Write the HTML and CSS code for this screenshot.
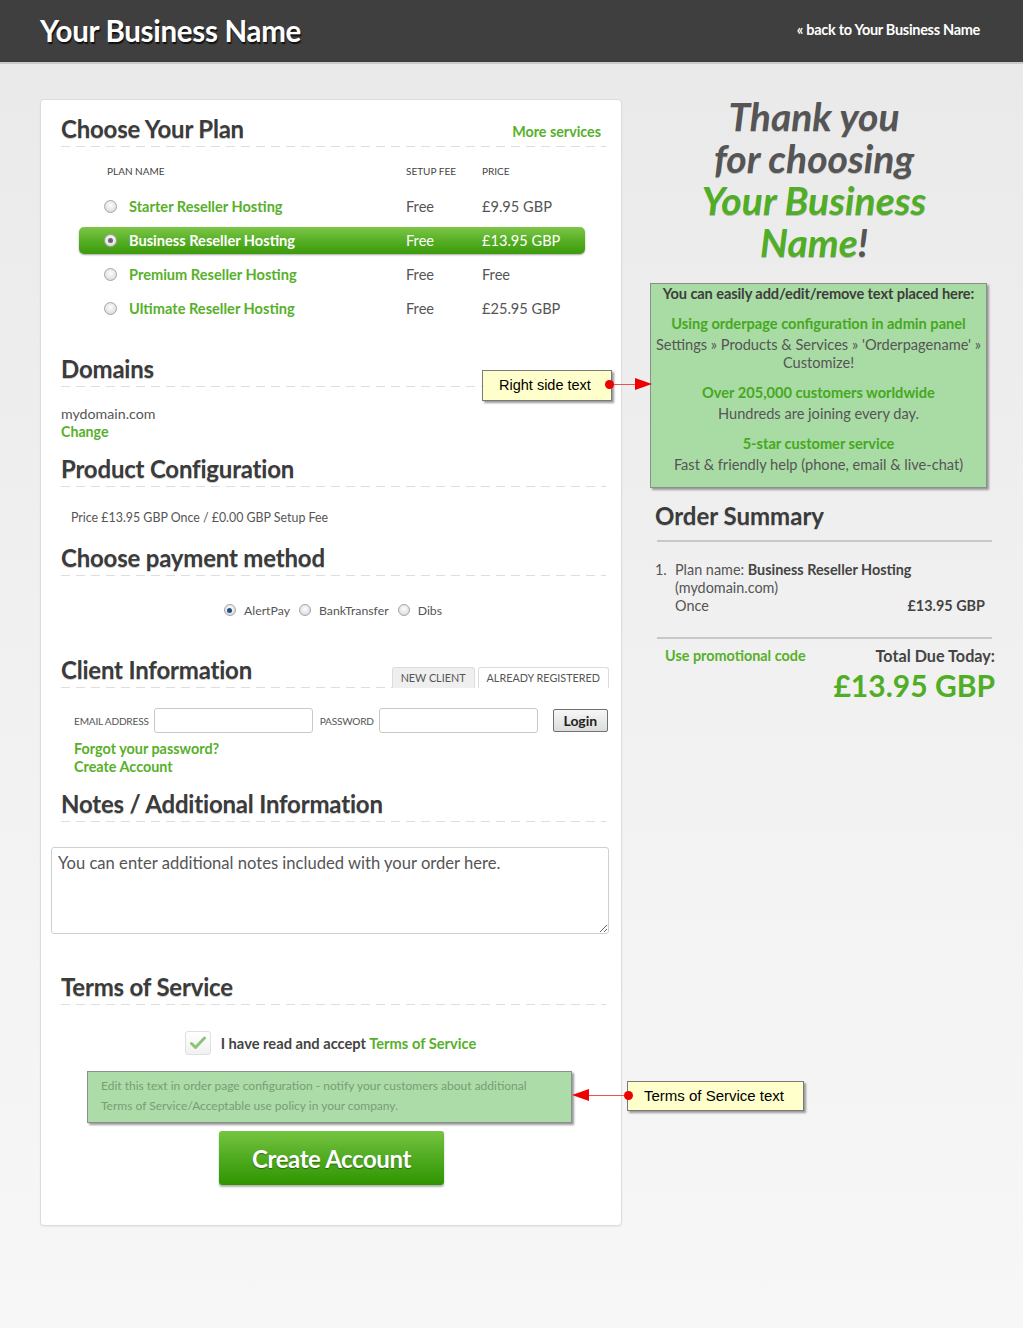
FILE: index.html
```html
<!DOCTYPE html>
<html>
<head>
<meta charset="utf-8">
<title>Order</title>
<link rel="stylesheet" href="styles.css">
</head>
<body>
<header class="topbar">
  <div class="brand">Your Business Name</div>
  <a class="back" href="#">« back to Your Business Name</a>
</header>

<main class="page">
  <section class="card">
    <div class="sec-head">
      <h2>Choose Your Plan</h2>
      <a class="link more" href="#">More services</a>
    </div>
    <div class="plans">
      <div class="plan-row plan-th">
        <span class="th-name">PLAN NAME</span>
        <span>SETUP FEE</span>
        <span>PRICE</span>
      </div>
      <div class="plan-row">
        <span class="radio"></span>
        <span class="pname">Starter Reseller Hosting</span>
        <span>Free</span>
        <span>£9.95 GBP</span>
      </div>
      <div class="plan-row selected">
        <span class="radio on"></span>
        <span class="pname">Business Reseller Hosting</span>
        <span>Free</span>
        <span>£13.95 GBP</span>
      </div>
      <div class="plan-row">
        <span class="radio"></span>
        <span class="pname">Premium Reseller Hosting</span>
        <span>Free</span>
        <span>Free</span>
      </div>
      <div class="plan-row">
        <span class="radio"></span>
        <span class="pname">Ultimate Reseller Hosting</span>
        <span>Free</span>
        <span>£25.95 GBP</span>
      </div>
    </div>

    <div class="sec-head s-domains"><h2>Domains</h2></div>
    <div class="domain">
      <div>mydomain.com</div>
      <a class="link" href="#">Change</a>
    </div>

    <div class="sec-head s-config"><h2>Product Configuration</h2></div>
    <div class="config">Price £13.95 GBP Once / £0.00 GBP Setup Fee</div>

    <div class="sec-head s-pay"><h2>Choose payment method</h2></div>
    <div class="pay">
      <span class="radio sm blue"></span><span class="pay-l">AlertPay</span>
      <span class="radio sm"></span><span class="pay-l">BankTransfer</span>
      <span class="radio sm"></span><span class="pay-l">Dibs</span>
    </div>

    <div class="sec-head s-client">
      <h2>Client Information</h2>
      <div class="tabs">
        <span class="tab">NEW CLIENT</span>
        <span class="tab active">ALREADY REGISTERED</span>
      </div>
    </div>
    <div class="login">
      <label class="lbl">EMAIL ADDRESS</label>
      <input class="field" type="text">
      <label class="lbl lbl-pw">PASSWORD</label>
      <input class="field" type="password">
      <button class="btn-login">Login</button>
    </div>
    <div class="login-links">
      <a class="link" href="#">Forgot your password?</a>
      <a class="link" href="#">Create Account</a>
    </div>

    <div class="sec-head s-notes"><h2>Notes / Additional Information</h2></div>
    <textarea class="notes">You can enter additional notes included with your order here.</textarea>

    <div class="sec-head s-terms"><h2>Terms of Service</h2></div>
    <div class="accept">
      <span class="check"><svg width="16" height="14" viewBox="0 0 16 14"><path d="M1.5 7.5 L5.5 11.5 L14.5 2" fill="none" stroke="#8cc47a" stroke-width="3" stroke-linecap="round" stroke-linejoin="round"/></svg></span>
      <span class="accept-t">I have read and accept <a class="link" href="#">Terms of Service</a></span>
    </div>
    <div class="tos-box">Edit this text in order page configuration - notify your customers about additional Terms of Service/Acceptable use policy in your company.</div>
    <div class="create-wrap"><button class="btn-create">Create Account</button></div>
  </section>

  <aside class="side">
    <h1 class="thanks">Thank you<br>for choosing<br><span class="g">Your Business<br>Name</span>!</h1>
    <div class="promo">
      <p class="promo-top">You can easily add/edit/remove text placed here:</p>
      <p class="pt">Using orderpage configuration in admin panel</p>
      <p class="pd">Settings » Products &amp; Services » 'Orderpagename' » Customize!</p>
      <p class="pt">Over 205,000 customers worldwide</p>
      <p class="pd">Hundreds are joining every day.</p>
      <p class="pt">5-star customer service</p>
      <p class="pd">Fast &amp; friendly help (phone, email &amp; live-chat)</p>
    </div>
    <h2 class="sum-head">Order Summary</h2>
    <div class="sum-list">
      <div class="sum-item">
        <span class="num">1.</span>
        <div class="sum-body">
          <div>Plan name: <b>Business Reseller Hosting</b></div>
          <div>(mydomain.com)</div>
          <div class="sum-line"><span>Once</span><b>£13.95 GBP</b></div>
        </div>
      </div>
    </div>
    <div class="totals">
      <a class="link promo-link" href="#">Use promotional code</a>
      <div class="tot">
        <div class="tot-l">Total Due Today:</div>
        <div class="tot-v">£13.95 GBP</div>
      </div>
    </div>
  </aside>

  <div class="note note-right">Right side text</div>
  <div class="arrow arrow-right"><span class="dot"></span><span class="ln"></span><span class="tri"></span></div>
  <div class="note note-tos">Terms of Service text</div>
  <div class="arrow arrow-left"><span class="tri"></span><span class="ln"></span><span class="dot"></span></div>
</main>
</body>
</html>
```

FILE: styles.css
```css
* { box-sizing: border-box; }
html, body { margin: 0; padding: 0; }
body {
  font-family: Lato, "Open Sans", sans-serif;
  font-size: 14.6px;
  color: #555;
  background: linear-gradient(#e9e9e9, #f0f0f0 600px, #f7f7f7);
  min-height: 1328px;
}
a { text-decoration: none; }
.link { color: #57b02a; font-weight: bold; }
h1, h2, p { margin: 0; }

.topbar {
  height: 64px;
  background: #3f3f3f;
  border-bottom: 2px solid #c9c9c9;
  display: flex;
  align-items: center;
  justify-content: space-between;
  padding: 0 43px 0 40px;
}
.brand {
  color: #fff;
  font-size: 29.5px;
  font-weight: bold;
  letter-spacing: -0.3px;
  text-shadow: 1px 2px 1px #111;
  margin-top: -2px;
}
.back {
  color: #fff;
  font-size: 14.5px;
  font-weight: bold;
  letter-spacing: -0.3px;
  margin-top: -4px;
}

.page {
  position: relative;
  display: flex;
  align-items: flex-start;
  gap: 28px;
  padding: 35px 0 0 40px;
}

.card {
  width: 582px;
  background: #fff;
  border: 1px solid #dcdcdc;
  border-radius: 4px;
  box-shadow: 0 1px 2px rgba(0,0,0,.06);
  padding: 14px 15px 40px 20px;
}

.sec-head {
  display: flex;
  justify-content: space-between;
  align-items: flex-end;
  padding-bottom: 4px;
  height: 33px;
  background: repeating-linear-gradient(90deg, #dedede 0 9px, transparent 9px 15px) left bottom / 100% 1px no-repeat;
}
.sec-head h2 {
  font-size: 24px;
  line-height: 29px;
  font-weight: bold;
  color: #3b3b3b;
  letter-spacing: -0.2px;
  text-shadow: 0 1px 0 #ccc;
}
.more { font-size: 14.3px; margin: 0 5px 3px 0; }

.plans { margin: 11px 21px 0 18px; display: flex; flex-direction: column; gap: 7px; }
.plan-row {
  display: grid;
  grid-template-columns: 50px 277px 76px 1fr;
  align-items: center;
  height: 27px;
  color: #555;
  font-size: 14.6px;
}
.plan-th { height: 26px; font-size: 10px; color: #444; margin-bottom: 2px; }
.plan-th .th-name { grid-column: 1 / 3; padding-left: 28px; }
.pname { color: #57b02a; font-weight: bold; }
.plan-row.selected {
  background: linear-gradient(#7ec647, #53ad22 55%, #3c9a0c);
  border-radius: 5px;
  box-shadow: 0 1px 2px rgba(0,0,0,.35);
  color: #fff;
}
.plan-row.selected .pname { color: #fff; }

.radio {
  display: inline-block;
  width: 13px;
  height: 13px;
  margin-left: 25px;
  border-radius: 50%;
  border: 1px solid #a5a5a5;
  background: radial-gradient(circle at 50% 40%, #fdfdfd, #d3d3d3);
  position: relative;
  flex: none;
}
.radio.on::after {
  content: "";
  position: absolute;
  left: 3px; top: 3px;
  width: 5px; height: 5px;
  border-radius: 50%;
  background: #666;
}
.radio.sm { width: 12px; height: 12px; margin: 0 8px 0 0; }
.radio.blue::after {
  content: "";
  position: absolute;
  left: 2.5px; top: 2.5px;
  width: 5px; height: 5px;
  border-radius: 50%;
  background: #1f4f86;
}

.s-domains { margin-top: 32px; }
.domain { margin-top: 18px; line-height: 18px; font-size: 14.2px; }
.s-config { margin-top: 13px; }
.config { margin-top: 23px; padding-left: 10px; font-size: 12.4px; line-height: 16px; color: #555; }
.s-pay { margin-top: 17px; }
.pay { margin: 26px 0 0 8px; display: flex; justify-content: center; align-items: center; font-size: 12.3px; color: #555; height: 16px; }
.pay-l { margin-right: 9px; }

.s-client { margin-top: 37px; align-items: flex-end; padding-bottom: 0; }
.s-client h2 { margin-bottom: 4px; }
.tabs { display: flex; gap: 3px; margin-right: -3px; }
.tab {
  font-size: 10.8px;
  color: #555;
  height: 21px;
  line-height: 20px;
  padding: 0 8px;
  border: 1px solid #dcdcdc;
  border-bottom: none;
  border-radius: 3px 3px 0 0;
  background: #fff;
}
.tab:first-child { background: #efefef; }

.login { margin-top: 20px; display: flex; align-items: center; padding-left: 13px; white-space: nowrap; }
.lbl { font-size: 10.1px; color: #555; letter-spacing: -0.2px; flex: none; }
.field {
  flex: none;
  width: 159px;
  height: 25px;
  border: 1px solid #c9c9c9;
  border-radius: 3px;
  margin-left: 5px;
  background: #fff;
}
.lbl-pw { margin-left: 7px; }
.btn-login {
  flex: none;
  margin-left: 15px;
  width: 55px;
  height: 23px;
  border: 1px solid #707070;
  border-radius: 2px;
  background: linear-gradient(#f7f7f7, #dcdcdc);
  font-family: Lato, sans-serif;
  font-weight: bold;
  font-size: 14px;
  color: #222;
  padding: 0;
}
.login-links { margin-top: 7px; padding-left: 13px; display: flex; flex-direction: column; align-items: flex-start; line-height: 18px; font-size: 14.4px; }

.s-notes { margin-top: 13px; }
.notes {
  display: block;
  margin: 25px 0 0 -10px;
  width: 558px;
  height: 87px;
  border: 1px solid #cfcfcf;
  border-radius: 3px;
  padding: 5px 6px;
  font-family: Lato, sans-serif;
  font-size: 16.6px;
  color: #555;
  resize: vertical;
}
.s-terms { margin-top: 38px; }

.accept { margin-top: 26px; display: flex; justify-content: center; align-items: center; gap: 10px; margin-left: -6px; }
.check {
  width: 26px; height: 24px;
  border: 1px solid #e0e0e0;
  border-radius: 3px;
  background: linear-gradient(#fff, #f1f1f1);
  display: flex; align-items: center; justify-content: center;
}
.accept-t { font-size: 14.7px; font-weight: bold; color: #444; }

.tos-box {
  margin: 16px 0 0 26px;
  width: 485px;
  height: 52px;
  background: #acdca7;
  border: 1px solid #8d8d8d;
  box-shadow: 2px 2px 2px #9a9a9a;
  padding: 4px 14px 0 13px;
  font-size: 12px;
  line-height: 20px;
  color: #7a9c77;
}
.create-wrap { display: flex; margin: 8px 0 0 158px; }
.btn-create {
  width: 225px;
  height: 54px;
  border: none;
  border-radius: 3px;
  background: linear-gradient(#76c441, #4fab20 50%, #2f9500);
  box-shadow: 0 2px 2px rgba(0,0,0,.3);
  color: #fff;
  font-family: Lato, sans-serif;
  font-size: 24px;
  font-weight: bold;
  letter-spacing: -0.4px;
  text-shadow: 0 1px 1px rgba(0,0,0,.4);
}

.side { width: 345px; }
.thanks {
  text-align: center;
  font-style: italic;
  font-weight: bold;
  font-size: 39px;
  line-height: 42px;
  color: #555;
  margin: -4px 17px 0 0;
  text-shadow: 0 1px 0 #bbb;
}
.thanks .g { color: #4fae25; }

.promo {
  margin-top: 20px;
  width: 337px;
  background: #a9dba4;
  border: 1px solid #8d8d8d;
  box-shadow: 2px 2px 2px #999;
  padding: 1px 0 13px;
  text-align: center;
}
.promo p { font-size: 14.6px; line-height: 18px; }
.promo .promo-top { font-weight: bold; color: #3d3d3d; letter-spacing: -0.1px; }
.promo .pt { font-weight: bold; color: #46a81e; margin-top: 11px; line-height: 20px; }
.promo .pd { color: #555; margin-top: 2px; }

.sum-head {
  margin: 13px 0 0 5px;
  font-size: 24px;
  line-height: 29px;
  color: #3b3b3b;
  text-shadow: 0 1px 0 #ccc;
}
.sum-list {
  margin: 10px 3px 0 7px;
  padding: 19px 7px 22px 0;
  border-top: 2px solid #c8c8c8;
  border-bottom: 2px solid #c8c8c8;
  line-height: 18px;
  font-size: 14.4px;
}
.sum-item { display: flex; }
.num { width: 20px; margin-left: -2px; flex: none; }
.sum-body { flex: 1; }
.sum-list b { color: #444; }
.sum-line { display: flex; justify-content: space-between; }

.totals { display: flex; justify-content: space-between; align-items: flex-start; padding: 7px 0 0 15px; }
.promo-link { font-size: 14.4px; line-height: 20px; }
.tot { text-align: right; }
.tot-l { font-size: 16.2px; line-height: 20px; font-weight: bold; color: #444; }
.tot-v { font-size: 30px; font-weight: bold; color: #4fae25; line-height: 34px; margin-top: 2px; }

.note {
  position: absolute;
  background: #ffffcc;
  border: 1px solid #7a7a7a;
  box-shadow: 2px 2px 2px #999;
  font-family: "Liberation Sans", Arial, sans-serif;
  font-size: 14.5px;
  color: #000;
  line-height: 28px;
}
.note-right { left: 482px; top: 306px; width: 130px; height: 31px; padding-left: 16px; }
.note-tos { left: 627px; top: 1017px; width: 177px; height: 30px; padding-left: 16px; font-size: 15px; }

.arrow { position: absolute; display: flex; align-items: center; height: 14px; }
.arrow .dot { width: 9px; height: 9px; border-radius: 50%; background: #e00; flex: none; }
.arrow .ln { height: 1px; background: #f05050; flex: 1; }
.arrow .tri { width: 0; height: 0; border-top: 6px solid transparent; border-bottom: 6px solid transparent; flex: none; }
.arrow-right { left: 605px; top: 313px; width: 47px; }
.arrow-right .tri { border-left: 17px solid #e00; }
.arrow-left { left: 572px; top: 1024px; width: 61px; }
.arrow-left .tri { border-right: 17px solid #e00; }
```
